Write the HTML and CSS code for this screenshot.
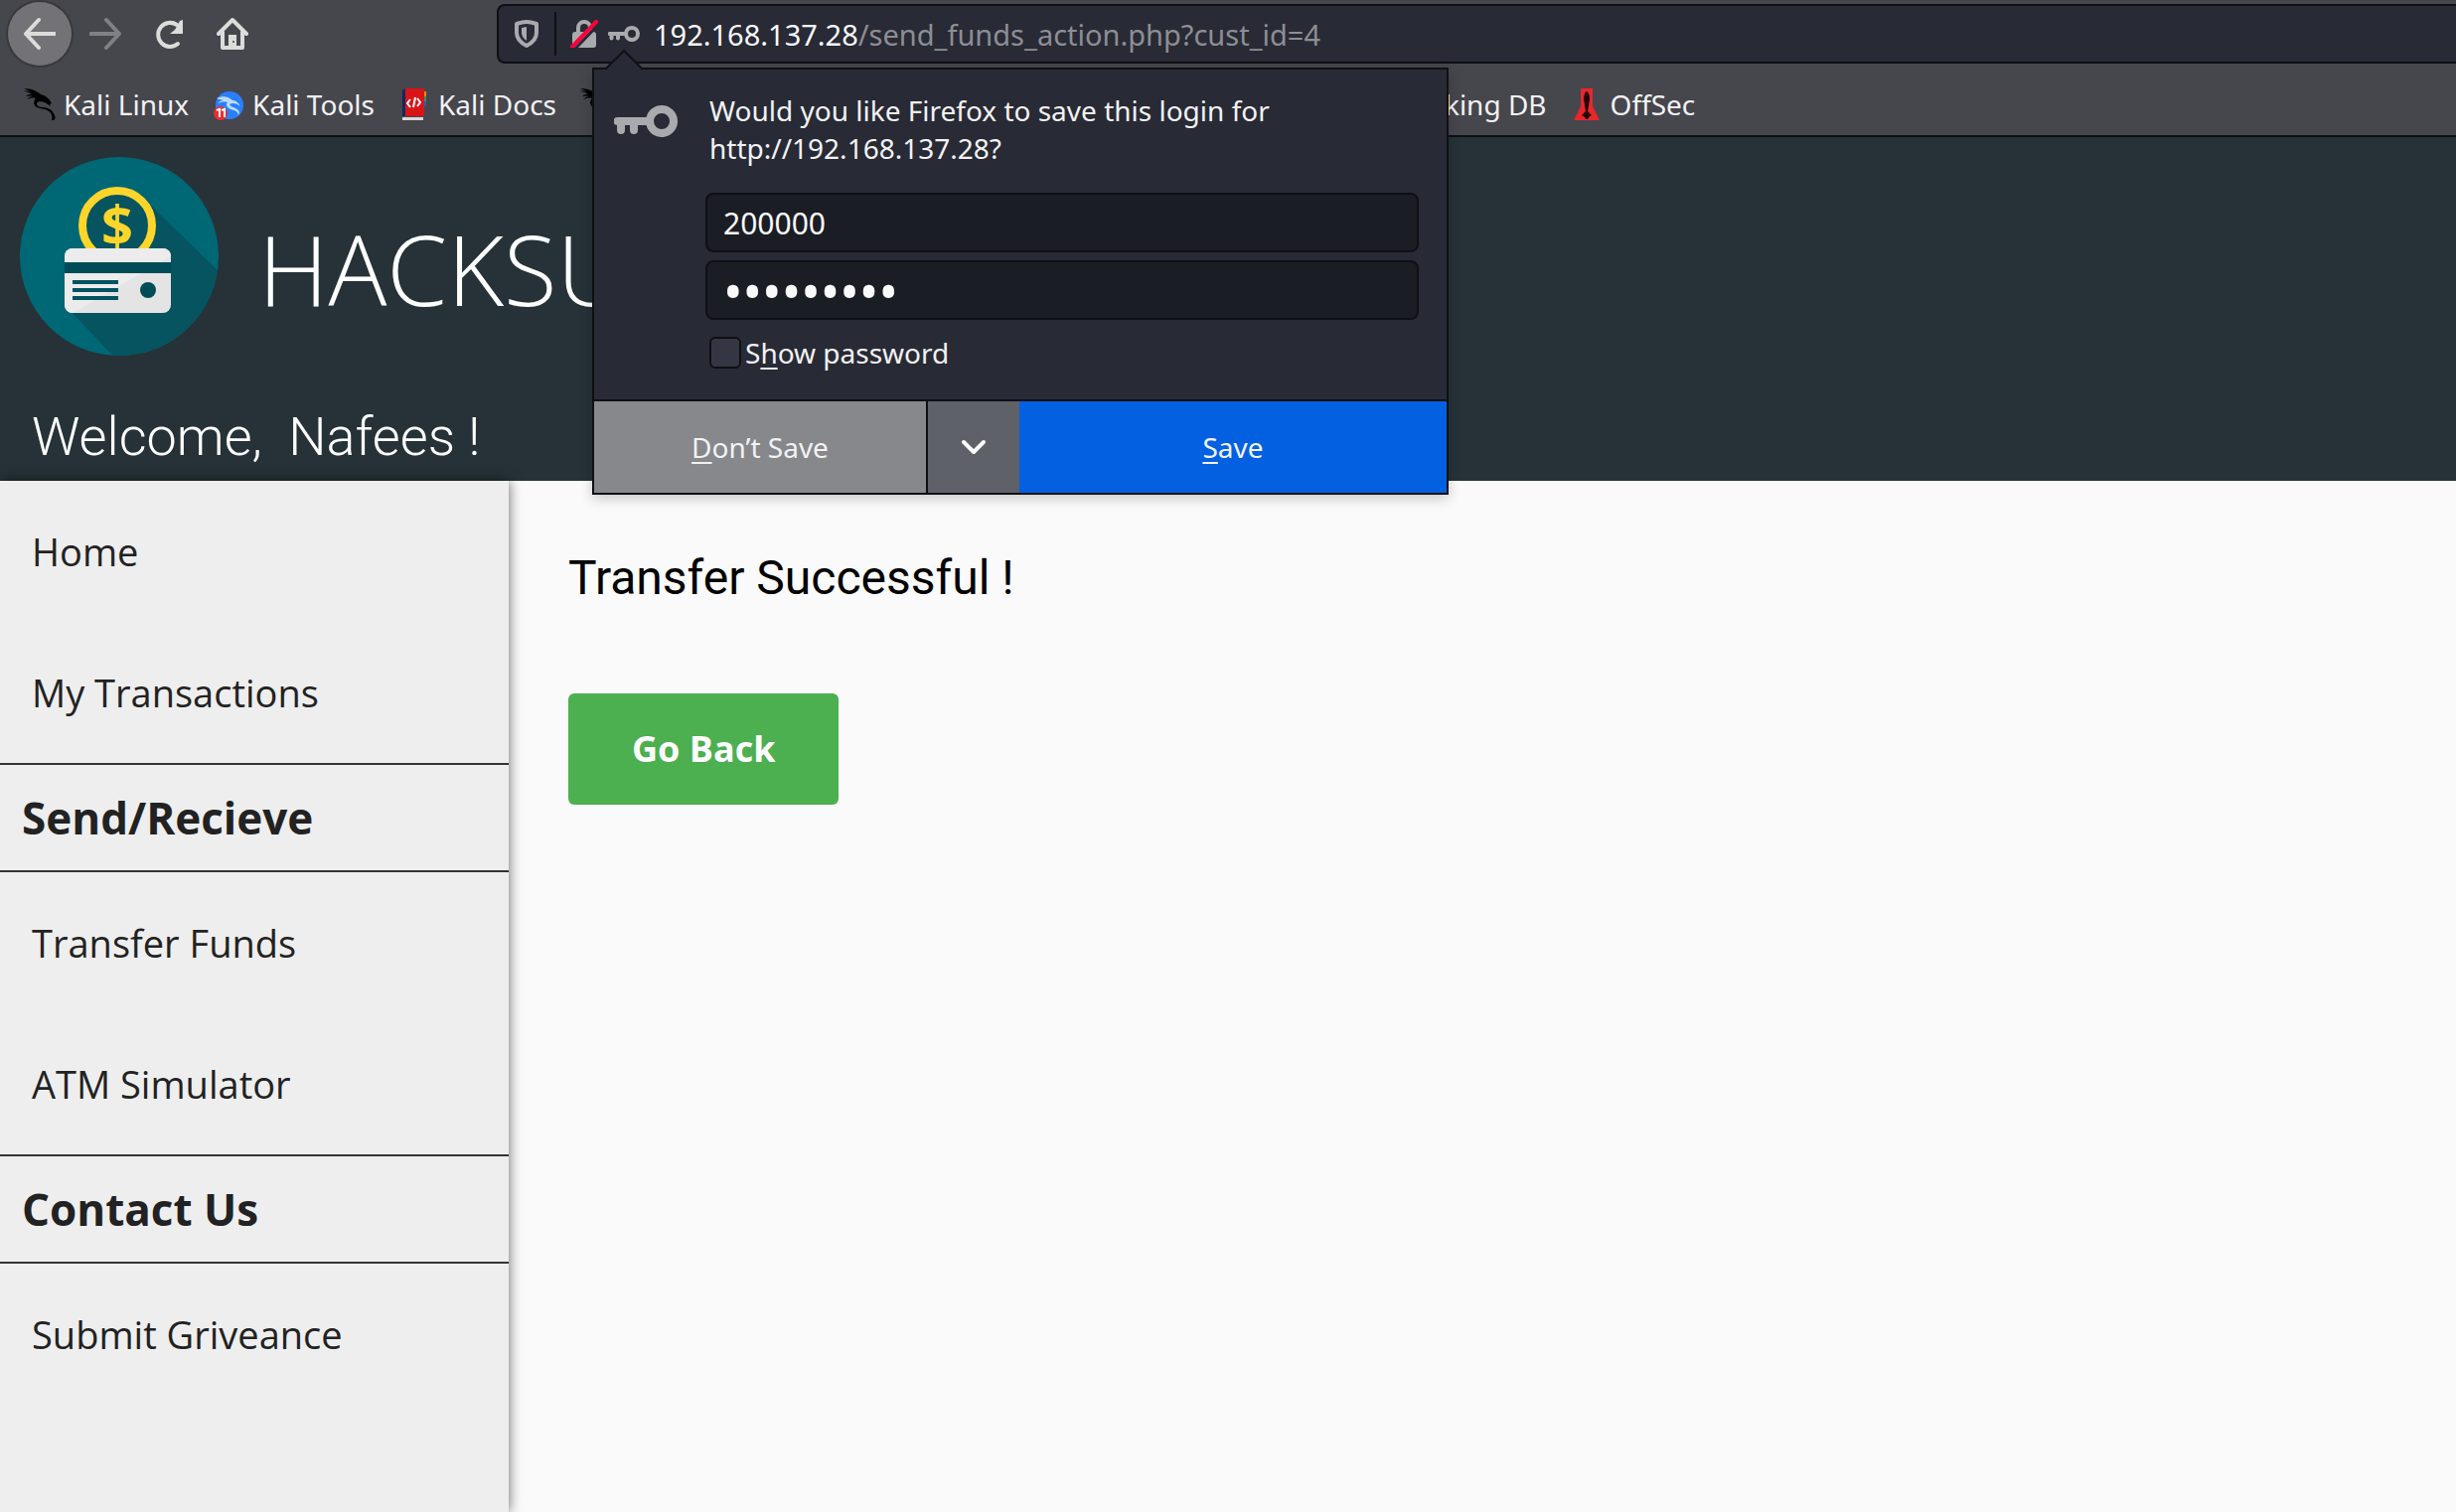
FILE: index.html
```
<!DOCTYPE html>
<html lang="en">
<head>
  <meta charset="UTF-8">
  <title>Transfer Funds</title>
  <meta name="viewport" content="width=device-width, initial-scale=1.0">
  <link rel="stylesheet" href="styles.css">
</head>
<body>

  <!-- shared icons -->
  <svg class="sprite" aria-hidden="true">
    <symbol id="key" viewBox="0 0 64 32">
      <path fill-rule="evenodd" d="M48 0a16 16 0 0 0-15.500 12H4a4 4 0 0 0-1 8v5a3.500 3.500 0 0 0 8 0v-5h5v5a4 4 0 0 0 8 0v-5h8.500A16 16 0 1 0 48 0zm0 8a8 8 0 1 1 0 16 8 8 0 0 1 0-16z"/>
    </symbol>
    <symbol id="dragon" viewBox="0 0 32 32">
      <path d="M0 0c7 0 12 2 17 6 4 1 8 3 11 9l-2 1 1 2-6-4c-4-1-7-1-8 1 0 3 3 4 7 4 6 1 9 3 11 8 1 3 1 5-3 5 1-4 0-7-3-9-3-3-8-2-12-4-3-2-4-6-1-9-3-1-6 0-9 1 2-2 4-3 6-3-3-1-5 0-7 0 2-2 4-2 6-2C5 4 3 3 0 3c3-1 5 0 7 1C5 2 3 1 0 0z"/>
    </symbol>
  </svg>

  <div class="browser">
    <div class="toolbar">
      <div class="nav-buttons">
        <button class="nav-btn back" aria-label="Back">
          <svg width="32" height="34" viewBox="0 0 32 34"><path d="M31 17H3M15 3L2 17l13 14" fill="none" stroke="#dcdcda" stroke-width="4" stroke-linecap="round" stroke-linejoin="round"/></svg>
        </button>
        <button class="nav-btn" aria-label="Forward">
          <svg width="32" height="34" viewBox="0 0 32 34"><path d="M1 17h28M17 3l13 14-13 14" fill="none" stroke="#818185" stroke-width="4" stroke-linecap="round" stroke-linejoin="round"/></svg>
        </button>
        <button class="nav-btn" aria-label="Reload">
          <svg width="32" height="32" viewBox="0 0 32 32"><path d="M24 7a12 12 0 1 0 1 19" fill="none" stroke="#dcdcda" stroke-width="4" stroke-linecap="round"/><path d="M30 2v14H17l5-4 5-9z" fill="#dcdcda"/></svg>
        </button>
        <button class="nav-btn" aria-label="Home">
          <svg width="32" height="34" viewBox="0 0 32 34"><path d="M2 17L16 3l14 14M6 15v16h20V15" fill="none" stroke="#dcdcda" stroke-width="4" stroke-linecap="round" stroke-linejoin="round"/><path d="M12 32V18h8v14z" fill="#dcdcda"/><circle cx="17" cy="25" r="1" fill="#46464d"/></svg>
        </button>
      </div>

      <div class="urlbar">
        <svg class="shield" width="24" height="28" viewBox="0 0 24 28"><path d="M12 2c4 0 7 1 10 2v9c0 6-4 10-10 13C6 23 2 19 2 13V4c3-1 6-2 10-2z" fill="none" stroke="#a9aaae" stroke-width="4" stroke-linejoin="round"/><path d="M12 7v14c-3-2-5-5-5-8V8z" fill="#a9aaae"/></svg>
        <span class="divider"></span>
        <svg class="lock" width="28" height="28" viewBox="0 0 28 28"><path d="M8 14V8a6 6 0 0 1 12 0v6" fill="none" stroke="#a9aaae" stroke-width="4"/><rect x="2" y="12" width="24" height="16" rx="3" fill="#a9aaae"/><path d="M4 30L29 4" stroke="#282a35" stroke-width="3"/><path d="M2 27L26 2" stroke="#ff0039" stroke-width="4" stroke-linecap="round"/></svg>
        <svg class="key-small" width="32" height="16"><use href="#key"/></svg>
        <span class="url"><b>192.168.137.28</b>/send_funds_action.php?cust_id=4</span>

        <!-- Save login popup -->
        <form class="popup">
          <svg class="arrow" width="40" height="20" viewBox="0 0 40 20"><path d="M0 20L20 1l20 19z" fill="#282a35"/><path d="M0 19h2L20 1l18 18h2" fill="none" stroke="#0f1014" stroke-width="2"/></svg>
          <div class="popup-body">
            <svg class="key-big" width="64" height="32"><use href="#key"/></svg>
            <div class="popup-content">
              <p>Would you like Firefox to save this login for http://192.168.137.28?</p>
              <input class="field" type="text" value="200000" aria-label="Username">
              <input class="field password" type="password" value="password1" aria-label="Password">
              <label class="show"><input type="checkbox"><span>S<u>h</u>ow password</span></label>
            </div>
          </div>
          <div class="popup-buttons">
            <button type="button" class="dont-save"><span><u>D</u>on’t Save</span></button>
            <button type="button" class="more" aria-label="More options">
              <svg width="26" height="16" viewBox="0 0 26 16"><path d="M3 3l10 10L23 3" fill="none" stroke="#fff" stroke-width="4" stroke-linecap="round" stroke-linejoin="round"/></svg>
            </button>
            <button type="button" class="save"><span><u>S</u>ave</span></button>
          </div>
        </form>
      </div>
    </div>

    <nav class="bookmarks">
      <a href="#"><svg width="32" height="32"><use href="#dragon"/></svg>Kali Linux</a>
      <a href="#"><svg width="32" height="32" viewBox="0 0 32 32"><circle cx="17" cy="17" r="14" fill="#2a7fff"/><path d="M4 10c6-3 12-2 16 2 4 0 6 3 8 6-4-3-8-4-11-2 1 3 6 3 9 6 1 2 1 3 0 5-1-5-5-5-8-6-4-2-5-5-3-7-4-1-7 0-10 1 2-2 4-3 6-3-3-1-5-1-7-2z" fill="#b9dcff"/><circle cx="8" cy="25" r="7" fill="#e53030"/><path d="M4 22l3-1v8M9 22l3-1v8" fill="none" stroke="#fff" stroke-width="2"/></svg>Kali Tools</a>
      <a href="#"><svg width="32" height="32" viewBox="0 0 32 32"><path d="M6 0h20v28H6z" fill="#d91419"/><path d="M4 2l3-2v28H4z" fill="#0d2a5e"/><path d="M26 3h2v5h-2z" fill="#e8861b"/><path d="M26 8h2v5h-2z" fill="#2a9d4a"/><path d="M26 13h2v5h-2z" fill="#2462b8"/><path d="M4 29h21v3H4z" fill="#ddd6d8"/><path d="M12 11l-3 4 3 4M19 10l3 4-3 4M17 9l-2 10" fill="none" stroke="#fff" stroke-width="2"/></svg>Kali Docs</a>
      <a href="#"><svg width="32" height="32"><use href="#dragon"/></svg>Kali Forums</a>
      <a href="#"><svg width="32" height="32"><use href="#dragon"/></svg>Kali NetHunter</a>
      <a href="#"><svg width="32" height="32"><use href="#dragon"/></svg>Exploit-DB</a>
      <a href="#"><svg width="32" height="32"><use href="#dragon"/></svg>Google Hacking DB</a>
      <a href="#"><svg width="32" height="32" viewBox="0 0 32 32"><path d="M10 0h12v18l7 14H3l7-14z" fill="#e8262b"/><path d="M16 3c2 1 3 4 3 8l-2 12 4 4-3 2-1 2h-2l-1-2-3-2 4-4-2-12c0-4 1-7 3-8z" fill="#240406"/></svg>OffSec</a>
    </nav>
  </div>

  <header class="site-header">
    <div class="brand">
      <svg class="logo" width="200" height="200" viewBox="0 0 200 200">
        <defs><clipPath id="disc"><circle cx="100" cy="100" r="100"/></clipPath></defs>
        <circle cx="100" cy="100" r="100" fill="#006775"/>
        <path d="M125 42L210 125V210H103L50 154z" fill="#05545f" clip-path="url(#disc)"/>
        <circle cx="98" cy="69" r="35" fill="#05545f" stroke="#fdd52b" stroke-width="8"/>
        <text class="dollar" x="98" y="89" text-anchor="middle">$</text>
        <rect x="45" y="92" width="107" height="65" rx="8" fill="#e4e4e4"/>
        <path d="M53 92h91a8 8 0 0 1 8 8l-99 57a8 8 0 0 1-8-8v-49a8 8 0 0 1 8-8z" fill="#ececec"/>
        <path d="M45 106h107v11H45z" fill="#004c57"/>
        <path d="M53 126h46M53 134h46M53 142h46" stroke="#00545f" stroke-width="4"/>
        <circle cx="129" cy="134" r="8" fill="#004c57"/>
      </svg>
      <h1>HACKSUDO</h1>
    </div>
    <p class="welcome">Welcome, &nbsp;Nafees !</p>
  </header>

  <div class="page">
    <nav class="sidebar">
      <a href="#">Home</a>
      <a href="#">My Transactions</a>
      <h2>Send/Recieve</h2>
      <a href="#">Transfer Funds</a>
      <a href="#">ATM Simulator</a>
      <h2>Contact Us</h2>
      <a href="#">Submit Griveance</a>
    </nav>

    <main class="content">
      <p>Transfer Successful !</p>
      <a class="btn" href="#">Go Back</a>
    </main>
  </div>

</body>
</html>
```

FILE: styles.css
```
:root {
  --chrome-bg: #46464d;
  --field-bg: #282a35;
  --line: #0f1014;
  --header-bg: #263238;
  --icon: #a9aaae;
}

* {
  margin: 0;
  padding: 0;
  box-sizing: border-box;
}

body {
  font-family: 'Open Sans', sans-serif;
  background: #fafafa;
  min-height: 100vh;
  display: flex;
  flex-direction: column;
  overflow-x: hidden;
}

a {
  color: inherit;
  text-decoration: none;
}

button {
  border: none;
  font: inherit;
  color: inherit;
}

svg {
  display: block;
  flex: none;
}

.sprite {
  position: absolute;
  width: 0;
  height: 0;
}

/* Browser chrome */
.browser {
  background: var(--chrome-bg);
  border-bottom: 2px solid var(--line);
  color: #f2f2f3;
  font-family: 'Noto Sans', sans-serif;
  font-size: 28px;
}

.toolbar {
  display: flex;
  align-items: center;
  height: 68px;
  padding-left: 8px;
}

.nav-buttons {
  display: flex;
  width: 492px;
}

.nav-btn {
  width: 64px;
  height: 64px;
  display: flex;
  align-items: center;
  justify-content: center;
  background: none;
  border-radius: 50%;
}

.nav-btn.back {
  background: #737377;
  box-shadow: 0 0 0 2px #38383d;
  margin-right: 2px;
}

.urlbar {
  position: relative;
  flex: 1;
  display: flex;
  align-items: center;
  height: 60px;
  padding-left: 16px;
  background: var(--field-bg);
  border: 2px solid var(--line);
  border-right: none;
  border-radius: 8px 0 0 8px;
}

.divider {
  width: 2px;
  height: 44px;
  margin: 0 14px 0 16px;
  background: var(--line);
}

.key-small,
.key-big {
  fill: var(--icon);
}

.key-small {
  margin: 0 14px 0 10px;
}

.url {
  color: #8d8e93;
  font-size: 29px;
}

.url b {
  color: #f9f9fa;
  font-weight: 400;
}

.bookmarks {
  display: flex;
  align-items: center;
  gap: 24px;
  height: 68px;
  padding: 6px 24px 0;
  white-space: nowrap;
}

.bookmarks a {
  display: flex;
  align-items: center;
  gap: 8px;
}

/* Save login popup */
.popup {
  position: absolute;
  top: 62px;
  left: 94px;
  width: 862px;
  background: var(--field-bg);
  border: 2px solid var(--line);
  box-shadow: 0 4px 12px rgba(0, 0, 0, 0.2);
  z-index: 10;
}

.arrow {
  position: absolute;
  top: -20px;
  left: 10px;
}

.popup-body {
  display: flex;
  gap: 28px;
  padding: 22px 28px;
}

.key-big {
  margin: 14px 0 0 -8px;
}

.popup-content {
  flex: 1;
  min-width: 0;
  display: flex;
  flex-direction: column;
}

.popup-content p {
  line-height: 38px;
  padding: 0 100px 0 4px;
  margin-bottom: 26px;
}

.field {
  width: 100%;
  height: 60px;
  margin-bottom: 8px;
  padding: 0 16px;
  background: #1b1d24;
  border: 2px solid var(--line);
  border-radius: 8px;
  color: #f9f9fa;
  font-family: inherit;
  font-size: 30px;
}

.field.password {
  font-size: 52px;
}

.show {
  display: flex;
  align-items: center;
  gap: 4px;
  height: 50px;
  padding-left: 4px;
}

.show input {
  appearance: none;
  width: 32px;
  height: 32px;
  background: #343643;
  border: 2px solid var(--line);
  border-radius: 6px;
}

.popup u {
  text-underline-offset: 4px;
}

.popup-buttons {
  display: flex;
  height: 94px;
  border-top: 2px solid var(--line);
}

.popup-buttons button {
  display: flex;
  align-items: center;
  justify-content: center;
}

.dont-save {
  width: 336px;
  background: #87888b;
  border-right: 2px solid var(--line);
}

.more {
  width: 92px;
  background: #5f6169;
}

.save {
  flex: 1;
  background: #0361e1;
}

/* Site header */
.site-header {
  background: var(--header-bg);
  color: #fff;
  padding: 20px 20px 12px;
}

.brand {
  display: flex;
  align-items: center;
  gap: 40px;
}

.dollar {
  font-family: 'Noto Sans', sans-serif;
  font-size: 56px;
  font-weight: 700;
  fill: #fdd52b;
}

.brand h1 {
  font-size: 98px;
  font-weight: 300;
  padding-top: 24px;
  line-height: 136px;
}

.welcome {
  font-family: Roboto, sans-serif;
  font-size: 54px;
  font-weight: 300;
  line-height: 64px;
  padding: 50px 12px 0;
}

/* Page */
.page {
  flex: 1;
  display: flex;
}

.sidebar {
  width: 512px;
  background: #eee;
  color: #222;
  box-shadow: 0 0 12px rgba(0, 0, 0, 0.6);
}

.sidebar a {
  display: block;
  padding: 0 32px;
  font-size: 38px;
  line-height: 142px;
}

.sidebar h2 {
  padding: 0 22px;
  font-size: 44px;
  line-height: 106px;
  border-top: 2px solid #333;
  border-bottom: 2px solid #333;
}

.content {
  flex: 1;
  padding: 69px 60px;
}

.content p {
  font-family: Roboto, sans-serif;
  font-size: 48px;
  line-height: 58px;
  margin-bottom: 87px;
  color: #000;
}

.btn {
  display: inline-block;
  padding: 0 64px;
  background: #4caf50;
  border-radius: 6px;
  color: #fff;
  font-size: 36px;
  font-weight: 700;
  line-height: 112px;
}
```
